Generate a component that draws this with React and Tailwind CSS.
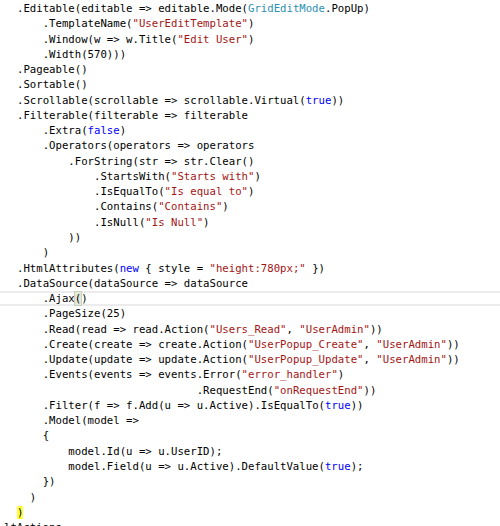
import React from "react";

// token kinds: p = plain, s = string, k = keyword, t = type
const S = (t) => ["s", t];
const K = (t) => ["k", t];
const T = (t) => ["t", t];

const lines = [
  [0, [".Editable(editable => editable.Mode(", T("GridEditMode"), ".PopUp)"]],
  [4, [".TemplateName(", S('"UserEditTemplate"'), ")"]],
  [4, [".Window(w => w.Title(", S('"Edit User"'), ")"]],
  [4, [".Width(570)))"]],
  [0, [".Pageable()"]],
  [0, [".Sortable()"]],
  [0, [".Scrollable(scrollable => scrollable.Virtual(", K("true"), "))"]],
  [0, [".Filterable(filterable => filterable"]],
  [4, [".Extra(", K("false"), ")"]],
  [4, [".Operators(operators => operators"]],
  [8, [".ForString(str => str.Clear()"]],
  [12, [".StartsWith(", S('"Starts with"'), ")"]],
  [12, [".IsEqualTo(", S('"Is equal to"'), ")"]],
  [12, [".Contains(", S('"Contains"'), ")"]],
  [12, [".IsNull(", S('"Is Null"'), ")"]],
  [8, ["))"]],
  [4, [")"]],
  [0, [".HtmlAttributes(", K("new"), " { style = ", S('"height:780px;"'), " })"]],
  [0, [".DataSource(dataSource => dataSource"]],
  [4, ["AJAX"], "current"],
  [4, [".PageSize(25)"]],
  [4, [".Read(read => read.Action(", S('"Users_Read"'), ", ", S('"UserAdmin"'), "))"]],
  [4, [".Create(create => create.Action(", S('"UserPopup_Create"'), ", ", S('"UserAdmin"'), "))"]],
  [4, [".Update(update => update.Action(", S('"UserPopup_Update"'), ", ", S('"UserAdmin"'), "))"]],
  [4, [".Events(events => events.Error(", S('"error_handler"'), ")"]],
  [28, [".RequestEnd(", S('"onRequestEnd"'), "))"]],
  [4, [".Filter(f => f.Add(u => u.Active).IsEqualTo(", K("true"), "))"]],
  [4, [".Model(model =>"]],
  [4, ["{"]],
  [8, ["model.Id(u => u.UserID);"]],
  [8, ["model.Field(u => u.Active).DefaultValue(", K("true"), ");"]],
  [4, ["})"]],
  [2, [")"]],
  [0, ["YELLOW"]],
  [-2, ["ltActions"]],
];

const colors = {
  s: "text-[#a31515]",
  k: "text-[#0000ff]",
  t: "text-[#2b91af]",
};

const Token = ({ tok }) => {
  if (tok === "AJAX") {
    return (
      <>
        .Ajax<span className="bg-[#e4e8dc] outline outline-1 outline-[#c9cfbd]">(</span>)
      </>
    );
  }
  if (tok === "YELLOW") {
    return <span className="bg-[#ffff3c]">)</span>;
  }
  if (typeof tok === "string") return <>{tok}</>;
  return <span className={colors[tok[0]]}>{tok[1]}</span>;
};

export default function App() {
  return (
    <div className="w-[500px] h-[526px] overflow-hidden bg-white pt-[1px] font-['DejaVu_Sans_Mono',monospace] text-[10.66px] leading-[15.27px] text-black">
      {lines.map(([indent, toks, flag], i) => (
        <div
          key={i}
          className={
            "h-[15.27px] whitespace-pre " +
            (flag === "current"
              ? "shadow-[inset_0_2px_0_#ececec,inset_0_-2px_0_#ececec]"
              : "")
          }
        >
          <span className={indent < 0 ? "pl-[4px]" : "pl-[17px]"}>
            {" ".repeat(Math.max(indent, 0))}
            {toks.map((t, j) => (
              <Token key={j} tok={t} />
            ))}
          </span>
        </div>
      ))}
    </div>
  );
}
